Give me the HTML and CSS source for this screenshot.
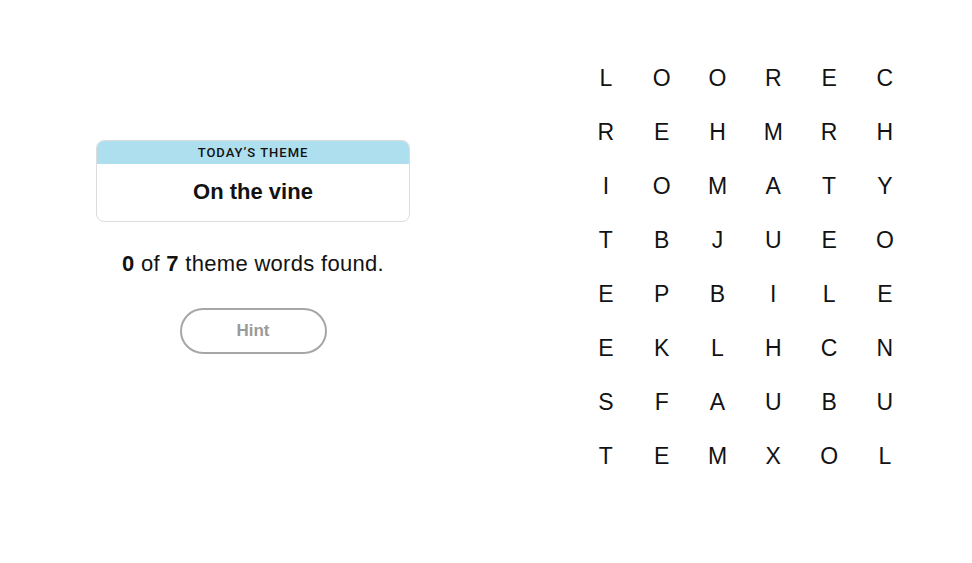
FILE: index.html
```html
<!DOCTYPE html>
<html lang="en">
<head>
    <meta charset="UTF-8">
    <meta name="viewport" content="width=device-width, initial-scale=1.0">
    <title>Strands</title>

    <link rel="stylesheet" href="styles.css">
</head>
<body>

    <div class="game">
        <div class="side-panel">
            <div class="theme-card">
                <div class="theme-label">TODAY&rsquo;S THEME</div>
                <div class="theme-name">On the vine</div>
            </div>

            <p class="progress"><b>0</b> of <b>7</b> theme words found.</p>

            <button class="hint-button" disabled>Hint</button>
        </div>

        <div class="board" id="board"></div>
    </div>

    <script>
        const rows = [
            "LOOREC",
            "REHMRH",
            "IOMATY",
            "TBJUEO",
            "EPBILE",
            "EKLHCN",
            "SFAUBU",
            "TEMXOL"
        ];

        // Build the letter grid
        const board = document.getElementById("board");
        rows.forEach(function(row) {
            row.split("").forEach(function(letter) {
                const cell = document.createElement("div");
                cell.className = "cell";
                cell.textContent = letter;
                board.appendChild(cell);
            });
        });
    </script>
</body>
</html>
```

FILE: styles.css
```css
*, *::before, *::after {
    box-sizing: border-box;
}

body {
    font-family: 'Liberation Sans', Arial, sans-serif;
    background-color: white;
    color: #121212;
    margin: 0;
    padding: 0;
}

.game {
    display: flex;
    align-items: flex-start;
    padding-top: 51px;
}

.side-panel {
    width: 506px;
    display: flex;
    flex-direction: column;
    align-items: center;
    padding-top: 89px;
}

.theme-card {
    width: 314px;
    border: 1px solid #dcdcdc;
    border-radius: 8px;
    overflow: hidden;
    text-align: center;
}

.theme-label {
    background-color: #aedfee;
    height: 23px;
    line-height: 24px;
    font-family: Roboto, 'Liberation Sans', sans-serif;
    font-size: 13px;
    font-weight: 500;
    letter-spacing: 1px;
}

.theme-name {
    height: 57px;
    line-height: 56px;
    font-size: 22px;
    font-weight: bold;
}

.progress {
    margin: 29px 0 0;
    font-size: 22px;
    letter-spacing: 0.3px;
    line-height: 26px;
}

.hint-button {
    margin-top: 31px;
    width: 147px;
    height: 46px;
    background-color: white;
    border: 2px solid #a6a6a6;
    border-radius: 23px;
    color: #9a9a9a;
    font-family: inherit;
    font-size: 17px;
    font-weight: bold;
}

.board {
    margin-left: 72px;
    display: grid;
    grid-template-columns: repeat(6, 55.8px);
    grid-auto-rows: 54px;
}

.cell {
    display: flex;
    align-items: center;
    justify-content: center;
    font-size: 23px;
}
```
